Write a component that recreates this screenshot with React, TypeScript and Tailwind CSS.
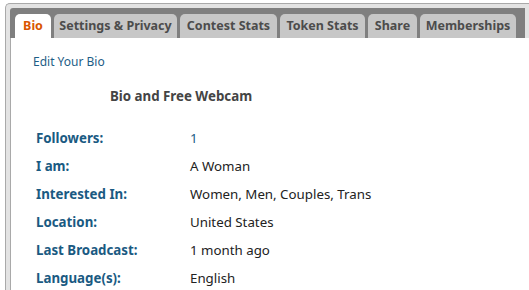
const tabs = [
  { label: "Bio", w: "w-[36px]", active: true },
  { label: "Settings & Privacy", w: "w-[123px]" },
  { label: "Contest Stats", w: "w-[97px]" },
  { label: "Token Stats", w: "w-[85px]" },
  { label: "Share", w: "w-[49px]" },
  { label: "Memberships", w: "w-[96px]" },
];

const rows = [
  { label: "Followers:", value: "1", link: true },
  { label: "I am:", value: "A Woman" },
  { label: "Interested In:", value: "Women, Men, Couples, Trans" },
  { label: "Location:", value: "United States" },
  { label: "Last Broadcast:", value: "1 month ago" },
  { label: "Language(s):", value: "English" },
];

export default function App() {
  return (
    <div className="w-[529px] h-[290px] overflow-hidden bg-white pt-[3px] pl-[5px] font-['Noto_Sans',sans-serif]">
      <div className="h-[300px] border-l border-t border-[#a9a9a9] rounded-tl-[5px] bg-[#e3e3e3] pt-[4px] pl-[4px]">
        <div className="flex items-end gap-[3px] h-[30px] bg-[#7f7f7f] pl-[5px] mr-[4px] rounded-tl-[3px]">
          {tabs.map((t) => (
            <div
              key={t.label}
              className={`${t.w} h-[24px] shrink-0 rounded-t-[5px] flex items-center justify-center text-[12.5px] font-bold ${
                t.active ? "bg-white text-[#d95600]" : "bg-[#c7c7c7] text-[#4c4c4c]"
              }`}
            >
              {t.label}
            </div>
          ))}
        </div>
        <div className="h-[260px] bg-white border-l border-[#a9a9a9]">
          <div className="pt-[16px] pl-[22px] text-[12px] leading-[16px] text-[#1d5d86]">Edit Your Bio</div>
          <div className="mt-[17px] pl-[99px] text-[13.3px] leading-[18px] font-bold text-[#444]">Bio and Free Webcam</div>
          <div className="mt-[20px] pl-[25px]">
            {rows.map((r) => (
              <div key={r.label} className="flex h-[28px] items-center text-[13.3px]">
                <div className="w-[154px] font-bold text-[#1a5a82]">{r.label}</div>
                <div className={r.link ? "text-[#1d5d86]" : "text-[#222]"}>{r.value}</div>
              </div>
            ))}
          </div>
        </div>
      </div>
    </div>
  );
}
